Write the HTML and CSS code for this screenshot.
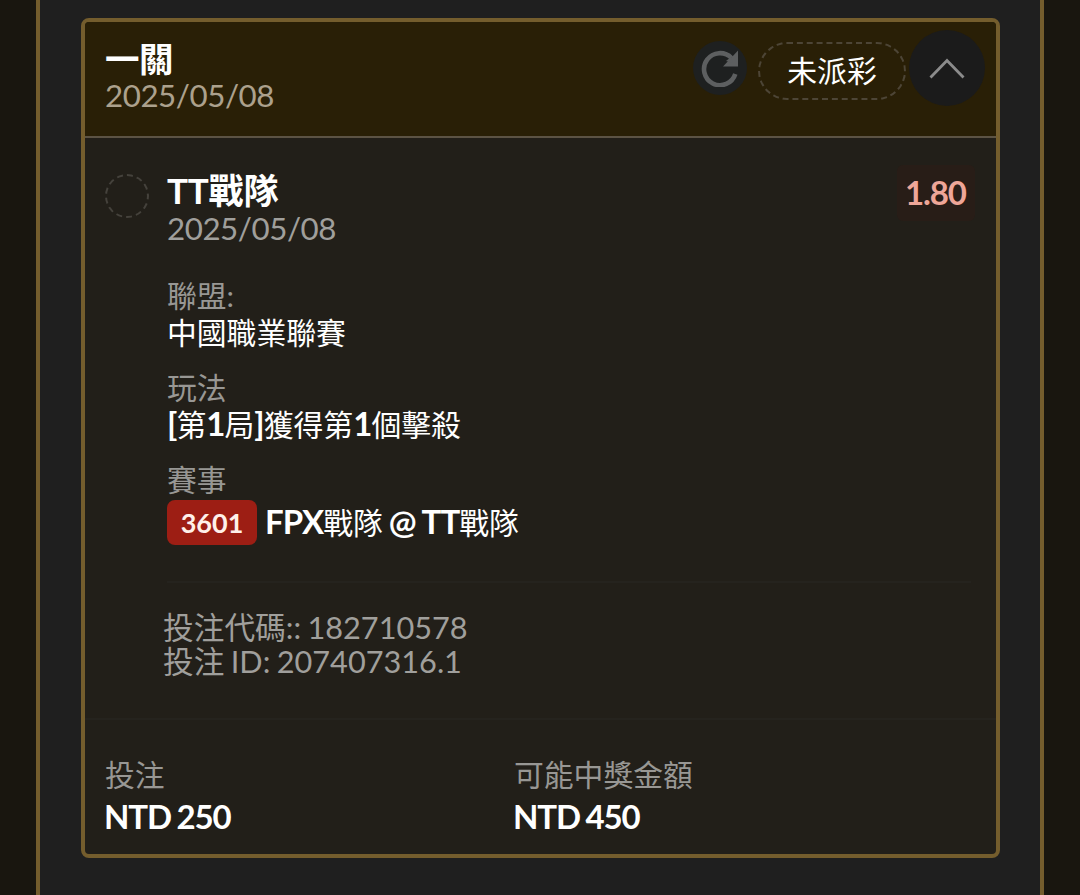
FILE: index.html
```html
<!DOCTYPE html>
<html lang="zh-Hant">
<head>
    <meta charset="UTF-8">
    <meta name="viewport" content="width=device-width, initial-scale=1.0">
    <title>投注</title>
    <link rel="stylesheet" href="styles.css">
</head>
<body>
    <div class="panel">
        <div class="card">
            <div class="card-header">
                <div class="header-text">
                    <div class="title">一關</div>
                    <div class="date">2025/05/08</div>
                </div>
                <div class="header-actions">
                    <button class="refresh-btn">
                        <svg width="38" height="38" viewBox="0 0 38 38">
                            <path d="M34.3 25A16 16 0 1 1 30.5 9" fill="none" stroke="#5d5f60" stroke-width="4.6"/>
                            <path d="M37 1.5v16H22z" fill="#5d5f60"/>
                            <path d="M25 12l5-4 2 6z" fill="#5d5f60"/>
                        </svg>
                    </button>
                    <span class="status">未派彩</span>
                    <button class="toggle-btn">
                        <svg width="36" height="22" viewBox="0 0 36 22">
                            <path d="M1.5 20.5L18 3.5l16.5 17" fill="none" stroke="#8b8b8b" stroke-width="2.8"/>
                        </svg>
                    </button>
                </div>
            </div>

            <div class="bet">
                <div class="circle"></div>
                <div class="bet-info">
                    <div class="bet-top">
                        <div>
                            <div class="title team">TT戰隊</div>
                            <div class="date bet-date">2025/05/08</div>
                        </div>
                        <span class="odds">1.80</span>
                    </div>
                    <div class="field">
                        <div class="label">聯盟:</div>
                        <div class="value">中國職業聯賽</div>
                    </div>
                    <div class="field">
                        <div class="label">玩法</div>
                        <div class="value mixed"><b>[</b>第<b>1</b>局<b>]</b>獲得第<b>1</b>個擊殺</div>
                    </div>
                    <div class="field">
                        <div class="label">賽事</div>
                        <div class="match">
                            <span class="badge">3601</span>
                            <div class="value mixed"><b>FPX</b>戰隊<b> @ TT</b>戰隊</div>
                        </div>
                    </div>
                    <div class="codes">
                        <div>投注代碼:: 182710578</div>
                        <div>投注 ID: 207407316.1</div>
                    </div>
                </div>
            </div>

            <div class="card-footer">
                <div>
                    <div class="label">投注</div>
                    <div class="amount">NTD 250</div>
                </div>
                <div>
                    <div class="label">可能中獎金額</div>
                    <div class="amount">NTD 450</div>
                </div>
            </div>
        </div>
    </div>
</body>
</html>
```

FILE: styles.css
```css
* {
    box-sizing: border-box;
}
body {
    margin: 0;
    height: 895px;
    padding: 0 36px;
    overflow: hidden;
    background: #19160f;
    color: #fff;
    font-family: Lato, "Noto Sans CJK TC", sans-serif;
    font-size: 29.8px;
}
.panel {
    height: 895px;
    padding: 18px 40px 0 41px;
    background: #1f1f1f;
    border-left: 4px solid #745d2d;
    border-right: 4px solid #745d2d;
}
.card {
    width: 919px;
    height: 840px;
    background: #221f19;
    border: 4px solid #745d2d;
    border-radius: 8px;
    overflow: hidden;
}
.card-header {
    display: flex;
    justify-content: space-between;
    height: 116px;
    padding: 19px 11px 0 20px;
    background: #291f06;
    border-bottom: 2px solid #5c5344;
}
.title {
    height: 36px;
    line-height: 35px;
    font-size: 34.5px;
    font-weight: bold;
    letter-spacing: -0.4px;
}
.team {
    font-size: 35px;
    letter-spacing: -0.2px;
}
.date {
    height: 36px;
    line-height: 36px;
    font-size: 31.3px;
    letter-spacing: -0.45px;
    color: #aca18d;
}
.header-actions {
    display: flex;
    align-items: center;
    height: 76px;
    margin-top: -11px;
}
button {
    display: flex;
    align-items: center;
    justify-content: center;
    padding: 0;
    border: none;
    border-radius: 50%;
}
.refresh-btn {
    width: 54px;
    height: 54px;
    margin-right: 11px;
    background: #1e2020;
}
.status {
    width: 148px;
    height: 58px;
    margin: 6px 3px 0 0;
    line-height: 53px;
    text-align: center;
    border: 2px dashed #4d4536;
    border-radius: 29px;
}
.toggle-btn {
    width: 76px;
    height: 76px;
    padding-right: 1px;
    background: #1b1b1b;
}
.bet {
    display: flex;
    height: 580px;
    padding: 35px 25px 0 20px;
}
.circle {
    flex: none;
    width: 44px;
    height: 44px;
    margin: 1px 18px 0 0;
    border: 2px dashed #45423c;
    border-radius: 50%;
}
.bet-info {
    flex: 1;
}
.bet-top {
    display: flex;
    justify-content: space-between;
    height: 104px;
}
.bet-date {
    margin-top: 1px;
    color: #a09f9c;
}
.odds {
    width: 78px;
    height: 56px;
    margin: -8px -4px 0 0;
    padding-left: 8px;
    line-height: 54px;
    background: #281d17;
    border-radius: 6px;
    color: #eea698;
    font-size: 33px;
    font-weight: bold;
    letter-spacing: -1.1px;
}
.label {
    height: 37px;
    line-height: 37px;
    color: #989794;
}
.value {
    height: 37px;
    line-height: 37px;
    white-space: pre;
}
.mixed {
    line-height: 35px;
}
.value b {
    font-size: 33px;
    letter-spacing: -0.9px;
    word-spacing: -1.2px;
}
.field {
    height: 92px;
}
.match {
    display: flex;
    align-items: center;
    height: 45px;
    margin-top: 2px;
}
.badge {
    width: 90px;
    height: 45px;
    margin-right: 8px;
    line-height: 46px;
    text-align: center;
    background: #9d1e14;
    border-radius: 8px;
    color: #fff0ea;
    font-size: 27px;
    font-weight: bold;
}
.codes {
    margin-top: 28px;
    padding-top: 28px;
    border-top: 2px solid #25231e;
    font-size: 30.7px;
    line-height: 34px;
    word-spacing: -1.5px;
    color: #a09f9c;
}
.codes div {
    height: 34px;
    margin-left: -4px;
}
.card-footer {
    display: grid;
    grid-template-columns: 409px 1fr;
    padding: 36px 20px 0;
    border-top: 2px solid #25231e;
}
.amount {
    height: 40px;
    margin: 3px 0 0 -1px;
    line-height: 40px;
    font-size: 33px;
    font-weight: bold;
    letter-spacing: -1.1px;
    word-spacing: -1.5px;
}
```
